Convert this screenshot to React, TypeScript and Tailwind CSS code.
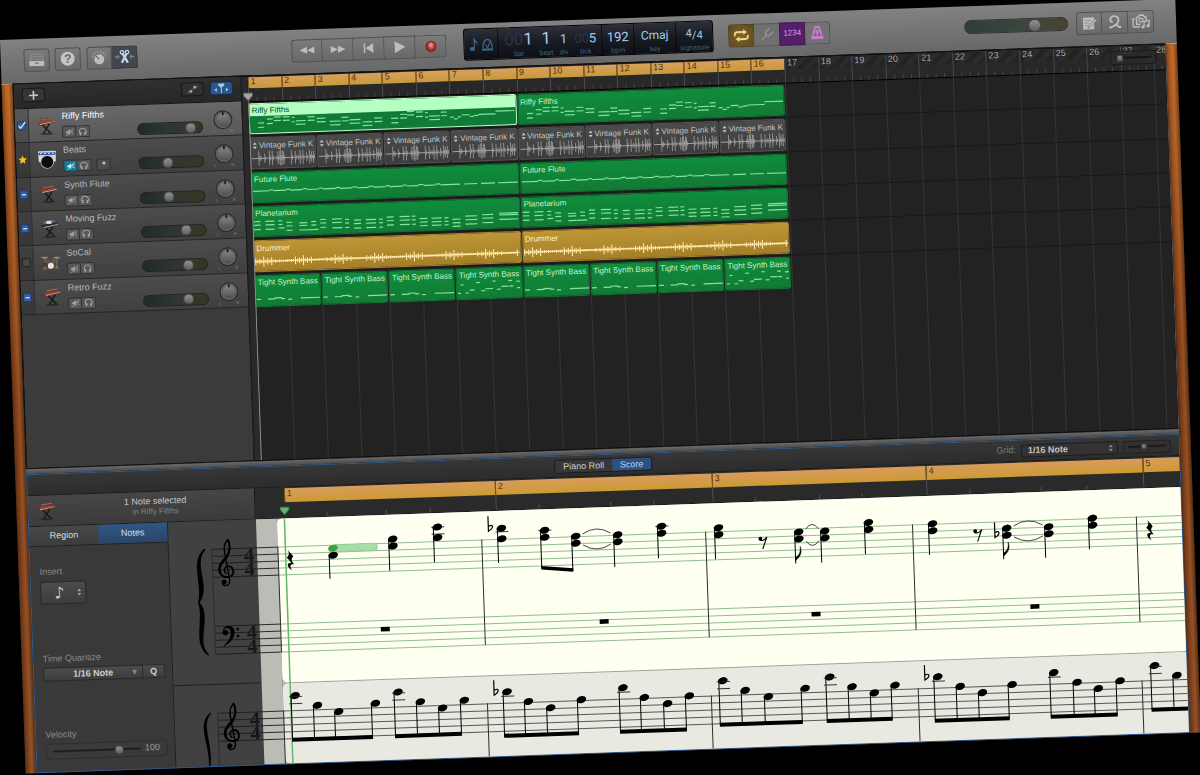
import React from 'react';

type Note = [number, number, number];

const BARS_VISIBLE = 27.34;
const bars = (n: number) => `${(n / BARS_VISIBLE) * 100}%`;

const TRACKS = [
  { name: 'Riffy Fifths', icon: 'keys', lock: 'on', volume: 89 },
  { name: 'Beats', icon: 'machine', lock: 'star', volume: 43 },
  { name: 'Synth Flute', icon: 'keys', lock: 'mixed', volume: 44 },
  { name: 'Moving Fuzz', icon: 'synth', lock: 'mixed', volume: 74 },
  { name: 'SoCal', icon: 'drums', lock: 'off', volume: 76 },
  { name: 'Retro Fuzz', icon: 'keys', lock: 'mixed', volume: 74 },
];

const pair = (x: number, w: number, a: number, b: number): Note[] => [[x, w, a], [x, w, b]];

const RIFFY: Note[] = [
  ...pair(8, 6, 21, 26), ...pair(17, 6, 17, 22), ...pair(24, 7, 15, 19), ...pair(33, 7, 15, 19),
  ...pair(42, 3, 16, 21), ...pair(46, 10, 20, 24), ...pair(58, 7, 16, 20), ...pair(67, 9, 18, 22),
  ...pair(80, 11, 22, 26), ...pair(92, 7, 18, 22), ...pair(100, 11, 21, 25), ...pair(113, 10, 24, 28),
  ...pair(125, 8, 20, 24), ...pair(142, 7, 21, 26), ...pair(151, 7, 17, 21), ...pair(158, 7, 14, 18),
  ...pair(167, 7, 15, 20), ...pair(176, 3, 16, 21), ...pair(180, 11, 20, 24), ...pair(192, 6, 16, 20),
  [201, 4, 22], [205, 4, 24], [209, 3, 22], [213, 8, 20], [221, 4, 22], [225, 5, 21],
  [230, 8, 20], [238, 9, 20], [247, 19, 17],
];

const FLUTE: Note[] = [
  [0, 17, 20], [17, 4, 19], [21, 13, 20], [34, 4, 19], [38, 12, 20], [50, 5, 19], [55, 12, 20], [67, 4, 19],
  [71, 13, 20], [84, 4, 19], [88, 12, 20], [100, 5, 19], [105, 12, 20], [117, 5, 19], [122, 12, 20],
  [134, 4, 19], [138, 13, 20], [151, 4, 19], [155, 12, 20], [167, 5, 19], [172, 12, 20], [184, 5, 19],
  [189, 20, 20], [213, 13, 20], [230, 14, 20], [247, 20, 20],
];

const PLANET_GROUPS: [number, number, number[]][] = [
  [0, 7, [16, 20, 25]], [12, 9, [16, 20, 25]], [25, 4, [16, 20]], [25, 6, [24]], [33, 6, [18, 22, 27]],
  [46, 8, [19, 22, 27]], [58, 5, [18, 22]], [54, 11, [27]], [67, 6, [16, 20, 25]], [79, 10, [16, 20, 26]],
  [92, 4, [17, 21, 26]], [101, 7, [18, 22, 27]], [113, 10, [18, 22, 27]], [126, 4, [18, 22, 27]],
  [134, 7, [16, 20, 25]], [147, 10, [16, 20, 25]], [159, 4, [16, 20, 25]], [167, 8, [19, 23, 27]],
  [179, 10, [19, 23, 27]], [192, 4, [19, 23, 27]], [200, 8, [21, 25, 29]], [213, 12, [18, 22, 27]],
  [230, 11, [17, 21, 26]], [247, 19, [16, 18, 23]],
];
const PLANET: Note[] = PLANET_GROUPS.flatMap(([x, w, ys]) => ys.map((y): Note => [x, w, y]));

const BASS_A: Note[] = [[0, 5, 25], [12, 8, 25], [19, 8, 24], [26, 4, 25], [33, 4, 26], [46, 20, 25]];
const BASS_B: Note[] = [
  [1, 3, 26], [4, 3, 17], [9, 3, 26], [13, 5, 23], [20, 4, 15], [25, 4, 24], [29, 8, 22], [37, 3, 14],
  [41, 4, 23], [46, 7, 20], [53, 4, 14], [54, 4, 20], [61, 4, 15], [62, 3, 22],
];

const FUNK_HITS: [number, number][] = [
  [8, 8], [10, 3], [14, 5], [19, 8], [22, 8], [27, 3], [28, 7], [30, 8], [31, 9], [33, 8], [34, 7],
  [42, 8], [46, 7], [49, 3], [51, 8], [54, 8], [58, 5], [61, 8], [63, 6], [65, 7],
];

function NoteMap({ notes, width }: { notes: Note[]; width: number }) {
  return (
    <svg className="col-start-1 row-start-1 h-full w-full" viewBox={`0 0 ${width} 33`} preserveAspectRatio="none" aria-hidden="true">
      {notes.map(([x, w, y], i) => (
        <rect key={i} x={x} y={y - 0.3} width={w} height={1.3} fill="#84e59d" />
      ))}
    </svg>
  );
}

function FunkWave() {
  return (
    <svg className="col-start-1 row-start-1 h-full w-full" viewBox="0 0 67 33" preserveAspectRatio="none" aria-hidden="true">
      <path d="M0 23h67" stroke="#b5b5b5" strokeWidth="0.9" />
      {FUNK_HITS.map(([x, a], i) => (
        <path key={i} d={`M${x} ${23 - a}V${23 + a}M${x + 1} ${23 - a / 3}v${a / 1.5}`} stroke="#9c9c9c" strokeWidth="0.9" />
      ))}
    </svg>
  );
}

function DrumWave() {
  const hits = Array.from({ length: 133 }, (_, i) => {
    const beat = i % 4 === 0 ? 5.5 : i % 4 === 2 ? 3.4 : 2;
    return Math.max(1.1, beat * (0.6 + 0.4 * Math.sin(i * 12.9)));
  });
  return (
    <svg className="col-start-1 row-start-1 h-full w-full" viewBox="0 0 268 33" preserveAspectRatio="none" aria-hidden="true">
      <path d="M0 23h267" stroke="#ffe6a0" strokeWidth="1.5" />
      {hits.map((a, i) => (
        <path key={i} d={`M${i * 2 + 1} ${23 - a}V${23 + a * 1.1}`} stroke="#ffe9ad" strokeWidth="1.1" />
      ))}
    </svg>
  );
}

interface RegionProps {
  title: string;
  span: number;
  tone?: 'green' | 'gray' | 'gold' | 'selected';
  children: React.ReactNode;
}

function Region({ title, span, tone = 'green', children }: RegionProps) {
  const tones = {
    green: 'border-[#0b7a31] bg-linear-to-b from-[#0f8d3c] to-[#127a36] text-[#c4f2cf]',
    gray: 'border-[#555] bg-linear-to-b from-[#4c4c4c] to-[#3c3c3c] text-[#c4c4c4]',
    gold: 'border-[#a9842a] bg-linear-to-b from-[#bd9636] to-[#a47f28] text-[#fff0c8]',
    selected: 'border-[#b9ffc6] bg-[#107b36] text-[#0a4a1e]',
  };
  return (
    <div className="h-full min-w-0 p-px pl-0" style={{ width: bars(span) }}>
      <div className={`grid h-full grid-cols-1 grid-rows-1 overflow-hidden rounded-[3px] border ${tones[tone]}`}>
        {children}
        <div
          className={`col-start-1 row-start-1 flex h-[12px] items-center gap-[2px] self-start whitespace-nowrap text-[8px] leading-[11px] ${tone === 'selected' ? 'bg-[#b4ffc2] pl-[2px]' : tone === 'gray' ? 'pl-px pt-[2px]' : 'pl-[2px] pt-[2px]'}`}
        >
          {tone === 'gray' && <UpDown className="ml-px h-[7px] w-[4px] shrink-0" />}
          <span>{title}</span>
        </div>
      </div>
    </div>
  );
}

function UpDown({ className = '' }: { className?: string }) {
  return (
    <svg className={className} viewBox="0 0 4 7" fill="currentColor" aria-hidden="true">
      <path d="M2 0l2 2.6H0zM2 7l2-2.6H0z" />
    </svg>
  );
}

function InstrumentIcon({ kind, className = '' }: { kind: string; className?: string }) {
  if (kind === 'machine') {
    return (
      <svg className={className} viewBox="0 0 20 20" aria-hidden="true">
        <path d="M1 2.500q0-1 1-1h16q1 0 1 1l-.5 9q0 1-1 1H2.500q-1 0-1-1z" fill="#d2d9e5" />
        <path d="M1.500 3h17v2.500h-17z" fill="#3156a0" />
        <path d="M3 4h2M7 4h2M11 4h2M15 4h2" stroke="#cfe0ff" />
        <circle cx="10" cy="12.500" r="6.800" fill="#bdbdbd" />
        <circle cx="10" cy="12.500" r="6" fill="#0b0b0b" />
      </svg>
    );
  }
  if (kind === 'drums') {
    return (
      <svg className={className} viewBox="0 0 20 20" fill="none" aria-hidden="true">
        <path d="M4 5v12M16 5v12M2 17l2-3 2 3M14 17l2-3 2 3" stroke="#8b8578" strokeWidth="0.7" />
        <ellipse cx="4" cy="5" rx="3.500" ry="0.900" fill="#a38c54" />
        <ellipse cx="16" cy="5.500" rx="3.500" ry="0.900" fill="#a38c54" />
        <rect x="5" y="7" width="4.500" height="4" rx="0.800" fill="#6b5440" />
        <rect x="10.500" y="7" width="4.500" height="4" rx="0.800" fill="#6b5440" />
        <rect x="1" y="10" width="4.500" height="4" rx="0.800" fill="#4b3b2c" />
        <circle cx="10" cy="13.500" r="3.700" fill="#5c4632" />
        <circle cx="10" cy="13.500" r="3" fill="#e4e4e4" />
      </svg>
    );
  }
  const body = kind === 'synth' ? '#26282f' : '#a03c2a';
  return (
    <svg className={className} viewBox="0 0 20 20" fill="none" aria-hidden="true">
      <ellipse cx="10" cy="18.500" rx="7" ry="1" fill="#1d1d1d" opacity="0.6" />
      <path d="M6 9l8.500 9M13.500 8.500L7 18" stroke="#171717" strokeWidth="1.400" />
      <path d="M1.500 6.500L17 4.500l1.500 2L4 9.500z" fill={body} />
      <path d="M3.500 8.600L18.300 6l.3.800L4 9.600z" fill="#cbb6a6" />
      <path d="M3.500 3.200L14.500 1.500l1.500 2L4.500 5.300z" fill={kind === 'synth' ? '#5b6a8c' : '#5e3d37'} />
      {kind === 'synth' ? <path d="M7 2.500h5v3H7z" fill="#dbe2ee" /> : <path d="M4.800 4.400L15.500 2.700" stroke="#b98372" strokeWidth="0.700" />}
      <path d="M2 7l2 2.800L18.500 7" stroke="#401610" strokeWidth="0.500" />
    </svg>
  );
}

function LockBox({ state, name }: { state: string; name: string }) {
  if (state === 'star') {
    return (
      <svg className="size-[9px]" viewBox="0 0 10 10" role="img" aria-label={`${name} is groove track`}>
        <path d="M5 .3l1.400 3.100 3.400.4-2.500 2.300.7 3.400L5 7.800 2 9.500l.7-3.400L.2 3.800l3.400-.4z" fill="#f4c02e" />
      </svg>
    );
  }
  return (
    <span className="grid place-items-center text-[#e3ecf8]">
      <input
        type="checkbox"
        aria-label={`Match groove: ${name}`}
        defaultChecked={state !== 'off'}
        className="col-start-1 row-start-1 size-[9px] appearance-none rounded-[2px] border border-[#202020] bg-[#484848] checked:border-[#1f3c69] checked:bg-[#315f9f]"
      />
      {state !== 'off' && (
        <svg className="pointer-events-none col-start-1 row-start-1 size-[9px]" viewBox="0 0 9 9" fill="none" stroke="currentColor" aria-hidden="true">
          {state === 'on' ? <path d="M1.500 4.500L3.500 7 8.500 0.800" strokeWidth="1.300" /> : <path d="M2.500 4.500h4" strokeWidth="1.200" />}
        </svg>
      )}
    </span>
  );
}

function PanKnob() {
  return (
    <svg className="h-[26px] w-[26px]" viewBox="0 0 26 26" aria-hidden="true">
      <defs>
        <linearGradient id="pan" x1="0" y1="0" x2="0" y2="1">
          <stop offset="0" stopColor="#868686" />
          <stop offset="1" stopColor="#505050" />
        </linearGradient>
      </defs>
      <circle cx="13" cy="12.500" r="9.500" fill="#2b2b2b" />
      <circle cx="13" cy="12.500" r="8.300" fill="#666" />
      <circle cx="13" cy="12.500" r="6.800" fill="url(#pan)" stroke="#555" strokeWidth="0.600" />
      <path d="M13 4.500v3.500" stroke="#161616" strokeWidth="1.600" />
      <text x="3" y="25" fontSize="4" fill="#8a8a8a">L</text>
      <text x="20" y="25" fontSize="4" fill="#8a8a8a">R</text>
    </svg>
  );
}

function MuteIcon() {
  return (
    <svg className="size-[9px]" viewBox="0 0 9 9" fill="currentColor" aria-hidden="true">
      <path d="M1 3.500h1.500L4.800 1.500v6L2.500 5.700H1z" />
      <path d="M1 8.500L8 1M6 4l2-.6M5.800 5.300l2.200 1" stroke="currentColor" strokeWidth="0.800" />
    </svg>
  );
}

function PhonesIcon() {
  return (
    <svg className="size-[9px]" viewBox="0 0 9 9" fill="none" stroke="currentColor" aria-hidden="true">
      <path d="M1.500 6.500C.3 3 2 1 4.500 1s4.200 2 3 5.500" strokeWidth="1" />
      <path d="M2.300 5v3M6.700 5v3" strokeWidth="1.500" />
    </svg>
  );
}

const thumb =
  '[&::-webkit-slider-thumb]:appearance-none [&::-webkit-slider-thumb]:rounded-full [&::-webkit-slider-thumb]:border [&::-webkit-slider-thumb]:border-[#4a4a4a] [&::-webkit-slider-thumb]:bg-linear-to-b [&::-webkit-slider-thumb]:from-[#929292] [&::-webkit-slider-thumb]:to-[#606060]';

function TrackHeader({ track, selected }: { track: (typeof TRACKS)[number]; selected: boolean }) {
  const small = 'grid h-[12px] w-[14px] place-items-center border border-[#303030] text-[#a4a4a4]';
  return (
    <div
      className={`flex min-h-0 border-b border-[#262626] bg-linear-to-b ${selected ? 'from-[#686868] to-[#585858]' : 'from-[#4c4c4c] to-[#404040]'}`}
    >
      <div className="grid w-[14px] shrink-0 place-items-center border-r border-[#303030] bg-black/15">
        <LockBox state={track.lock} name={track.name} />
      </div>
      <div className="grid w-[33px] shrink-0 place-items-center">
        <InstrumentIcon kind={track.icon} className="size-[20px]" />
      </div>
      <div className="flex w-[75px] shrink-0 flex-col gap-[4px] pt-[2px]">
        <span className={`whitespace-nowrap text-[9px] leading-[12px] ${selected ? 'text-white' : 'text-[#b9b9b9]'}`}>{track.name}</span>
        <div className="flex">
          <button aria-label={`Mute ${track.name}`} className={`${small} rounded-l-[2px] ${track.name === 'Beats' ? 'bg-[#157a9c] text-[#c8efff]' : 'bg-[#585858]'}`}>
            <MuteIcon />
          </button>
          <button aria-label={`Solo ${track.name}`} className={`${small} rounded-r-[2px] border-l-0 bg-[#585858]`}>
            <PhonesIcon />
          </button>
          {track.name === 'Beats' && (
            <button aria-label="Track options" className={`${small} ml-[5px] rounded-[2px] bg-[#4c4c4c]`}>
              <span className="mb-[3px] size-[3px] rounded-full bg-[#c4c4c4]" />
            </button>
          )}
        </div>
      </div>
      <input
        type="range"
        aria-label={`${track.name} volume`}
        defaultValue={track.volume}
        className={`mt-[18px] h-[12px] w-[66px] appearance-none rounded-full border border-[#222] bg-linear-to-r from-[#202c26] via-[#2e3731] to-[#393523] ${thumb} [&::-webkit-slider-thumb]:size-[11px]`}
      />
      <div className="ml-[7px] grid place-items-center pt-[3px]">
        <PanKnob />
      </div>
    </div>
  );
}

function Ruler() {
  return (
    <div className="relative flex h-[26px] overflow-hidden border-b border-black bg-[#282828] pt-px text-[9px] leading-[9px]">
      {Array.from({ length: 28 }, (_, i) => {
        const looped = i < 16;
        return (
          <div key={i} className="h-full shrink-0" style={{ width: bars(1) }}>
            <div
              className={`h-[11px] border-l pl-[2px] ${looped ? 'border-[#8a6420] bg-linear-to-b from-[#d9a05c] to-[#c9993a] text-[#4a3008]' : 'border-[#4a4a4a] bg-[repeating-linear-gradient(135deg,#2b2b2b_0_5px,#232323_5px_10px)] text-[#a8a8a8]'}`}
            >
              {i + 1}
            </div>
            <svg className="h-[14px] w-full" viewBox="0 0 32 14" preserveAspectRatio="none" aria-hidden="true">
              <path d="M.5 0v14" stroke="#4e4e4e" />
              <path d="M8.500 9v4M16.500 9v4M24.500 9v4" stroke="#454545" />
            </svg>
          </div>
        );
      })}
      <div className="absolute right-[9px] top-[5px] flex h-[14px] w-[46px] items-center rounded-[3px] border border-[#1c1c1c] bg-[#2b2b2b]/80 px-1">
        <input
          type="range"
          aria-label="Horizontal zoom"
          defaultValue={4}
          className={`h-[2px] w-full appearance-none rounded-full bg-[#151515] ${thumb} [&::-webkit-slider-thumb]:size-[7px]`}
        />
      </div>
    </div>
  );
}

function Lanes() {
  return (
    <div
      className="relative flex-1 bg-[#222]"
      style={{ backgroundImage: 'linear-gradient(90deg,#343434 1px,transparent 1px)', backgroundSize: `${100 / BARS_VISIBLE}% 100%`, backgroundRepeat: 'repeat-x' }}
    >
      <div className="grid h-[206px] grid-rows-6 divide-y divide-[#1a1a1a]">
        <div className="flex min-h-0">
          <Region title="Riffy Fifths" span={8} tone="selected"><NoteMap notes={RIFFY} width={267} /></Region>
          <Region title="Riffy Fifths" span={8}><NoteMap notes={RIFFY} width={267} /></Region>
        </div>
        <div className="flex min-h-0">
          {Array.from({ length: 8 }, (_, i) => (
            <Region key={i} title="Vintage Funk K" span={2} tone="gray"><FunkWave /></Region>
          ))}
        </div>
        <div className="flex min-h-0">
          <Region title="Future Flute" span={8}><NoteMap notes={FLUTE} width={267} /></Region>
          <Region title="Future Flute" span={8}><NoteMap notes={FLUTE} width={267} /></Region>
        </div>
        <div className="flex min-h-0">
          <Region title="Planetarium" span={8}><NoteMap notes={PLANET} width={267} /></Region>
          <Region title="Planetarium" span={8}><NoteMap notes={PLANET} width={267} /></Region>
        </div>
        <div className="flex min-h-0">
          <Region title="Drummer" span={8} tone="gold"><DrumWave /></Region>
          <Region title="Drummer" span={8} tone="gold"><DrumWave /></Region>
        </div>
        <div className="flex min-h-0">
          {Array.from({ length: 8 }, (_, i) => (
            <Region key={i} title="Tight Synth Bass" span={2}><NoteMap notes={i % 4 === 3 ? BASS_B : BASS_A} width={66} /></Region>
          ))}
        </div>
      </div>
    </div>
  );
}

function Playhead({ color, fill }: { color: string; fill: string }) {
  return (
    <svg className="h-[9px] w-[10px]" viewBox="0 0 10 9" aria-hidden="true">
      <path d="M.5.5h9v3L5 8.500.5 3.500z" fill={fill} stroke={color} />
    </svg>
  );
}

/* ---------- score ---------- */

const STAFF_TOPS = [28, 105, 192];
const BARLINES = [43, 109, 313, 537, 744, 968];

interface Chord {
  x: number;
  heads: number[];
  stem: number;
  ledgers?: number[];
  flag?: boolean;
}

const CHORDS: Chord[] = [
  { x: 164, heads: [38.5], stem: 62 },
  { x: 224, heads: [24.5, 31.5], stem: 56 },
  { x: 269, heads: [14, 24.5], stem: 49, ledgers: [14, 21] },
  { x: 333, heads: [17.5, 28], stem: 52, ledgers: [21] },
  { x: 376, heads: [21, 28], stem: 58, ledgers: [21] },
  { x: 407, heads: [28, 35], stem: 62 },
  { x: 449, heads: [28, 35], stem: 60 },
  { x: 493, heads: [21, 28], stem: 53, ledgers: [21] },
  { x: 550, heads: [24.5, 31.5], stem: 56 },
  { x: 630, heads: [31.5, 38.5], stem: 63, flag: true },
  { x: 656, heads: [31.5, 38.5], stem: 63 },
  { x: 700, heads: [24.5, 31.5], stem: 56 },
  { x: 764, heads: [28, 35], stem: 59 },
  { x: 838, heads: [35, 42], stem: 66, flag: true },
  { x: 880, heads: [35, 42], stem: 66 },
  { x: 924, heads: [28, 35], stem: 59 },
];

const RUNS = [
  { xs: [121, 143, 164, 201], low: false },
  { xs: [224, 246, 268, 290], low: false },
  { xs: [333, 354, 376, 407], low: true },
  { xs: [449, 470, 493, 515], low: true },
  { xs: [549, 571, 594, 631], low: false },
  { xs: [656, 678, 700, 721], low: false },
  { xs: [764, 786, 808, 838], low: true },
  { xs: [880, 903, 924, 946], low: true },
  { xs: [981, 1003, 1025, 1047], low: false },
];

function Head({ x, y, fill = '#000' }: { x: number; y: number; fill?: string }) {
  return <ellipse cx={x} cy={y} rx="4.900" ry="3.400" fill={fill} transform={`rotate(-14 ${x} ${y})`} />;
}

function Flat({ x, y }: { x: number; y: number }) {
  return (
    <path
      d={`M${x - 2} ${y - 10}V${y + 5}C${x + 4} ${y + 1.5} ${x + 3} ${y - 2.5} ${x - 1.5} ${y}`}
      fill="none"
      stroke="#000"
      strokeWidth="1.200"
    />
  );
}

function QuarterRest({ x, y }: { x: number; y: number }) {
  return (
    <path
      transform={`translate(${x} ${y})`}
      d="M-2.500-10.500C-1-8 2.500-5.500 3-3.500 1-1.500.5.500 3.800 4.500 0 3-1.500 6 1.500 10-4 7-4 1.500 1 3-1 0-2-1-3.500-2.500-1-5-.5-7-2.500-10.500z"
    />
  );
}

function EighthRest({ x, y }: { x: number; y: number }) {
  return (
    <g transform={`translate(${x} ${y})`}>
      <circle cx="-2.500" cy="-4" r="1.900" />
      <path d="M-3-2.500C0-1.500 2-2.500 4-5.500L-.5 6.500" fill="none" stroke="#000" strokeWidth="1.100" />
    </g>
  );
}

function TrebleClef({ y }: { y: number }) {
  return (
    <g transform={`translate(47 ${y - 10})`} fill="none" stroke="#000" strokeLinecap="round">
      <path d="M9.500 35C6.500 33 7.500 28 11.500 28" strokeWidth="1.500" />
      <path d="M11.500 27.800C16 28 17.500 32.500 16.200 35.500 14 40 5.500 40 3.300 34" strokeWidth="1.900" />
      <path d="M3.300 34C.8 27 7 23 10.500 18.500" strokeWidth="2.800" />
      <path d="M10.500 18.500C14.500 13.500 14.500 6 12.300 1.500" strokeWidth="2.200" />
      <path d="M12.300 1.500C8.500 4.500 7.800 10 8.700 15L12.700 41C13.300 46.500 8.500 49 5.500 45.500" strokeWidth="1.400" />
      <circle cx="7" cy="43.500" r="2.300" fill="#000" strokeWidth="0.500" />
    </g>
  );
}

function TimeSignature({ y }: { y: number }) {
  return (
    <g fontFamily="'Liberation Serif', serif" fontWeight="700" fontSize="20" textAnchor="middle" fill="#161616">
      <text x="80" y={y + 14}>4</text>
      <text x="80" y={y + 28}>4</text>
    </g>
  );
}

function Ties({ x1, x2, y1, y2 }: { x1: number; x2: number; y1: number; y2: number }) {
  const m = (x1 + x2) / 2;
  return <path d={`M${x1} ${y1}Q${m} ${y1 - 9} ${x2} ${y1}M${x1} ${y2}Q${m} ${y2 + 9} ${x2} ${y2}`} fill="none" stroke="#333" strokeWidth="0.900" />;
}

function Score() {
  return (
    <svg className="absolute inset-0 h-full w-full" viewBox="0 0 1013 245" preserveAspectRatio="xMinYMin slice" role="img" aria-label="Score of Riffy Fifths">
      {STAFF_TOPS.map((top, s) =>
        [0, 7, 14, 21, 28].map((d) => (
          <g key={`${s}-${d}`}>
            <path d={`M43 ${top + d + 0.5}H109`} stroke="#1c1c1c" strokeWidth="0.900" />
            <path d={`M109 ${top + d + 0.5}H1013`} stroke={s < 2 ? '#86b787' : '#4a4a47'} strokeWidth="0.900" />
          </g>
        )),
      )}
      {BARLINES.map((x) => (
        <path key={x} d={`M${x} 28V133.500M${x} 192V245`} stroke="#2c2c2c" strokeWidth="1" />
      ))}

      <path d="M36 28C22 42 41 66 28 81 41 96 22 120 36 134 20 122 34 97 28 81 34 65 20 40 36 28z" stroke="#000" strokeWidth="1.400" />
      <path d="M36 192C24 204 38 224 33 246 36 224 21 205 36 192z" stroke="#000" strokeWidth="1.400" />
      <TrebleClef y={28} />
      <TrebleClef y={192} />
      <circle cx="53.500" cy="112" r="2.800" />
      <path d="M50.800 111C51 104.500 62.500 103.500 62.800 111 63 119 56.500 123.500 50 126.500 56 121.500 59 118 58.800 111.500 58.500 106 52.500 106.500 50.800 111z" />
      <circle cx="66" cy="109" r="1.400" />
      <circle cx="66" cy="116" r="1.400" />
      {STAFF_TOPS.map((top) => <TimeSignature key={top} y={top} />)}

      <path d="M116.500 0V245" stroke="#62b865" strokeWidth="1.500" />

      <QuarterRest x={121} y={42} />
      <QuarterRest x={981} y={42} />
      <EighthRest x={594} y={41} />
      <EighthRest x={809} y={41} />
      <Flat x={322} y={15} />
      <Flat x={828} y={39} />
      <Flat x={322} y={179} />
      <Flat x={753} y={179} />

      <rect x="166" y="28" width="42" height="7" fill="#a9dcab" stroke="#8ccb8f" strokeWidth="0.800" />
      <Head x={164} y={31.5} fill="#3f9f45" />
      {CHORDS.map((c) => (
        <g key={c.x}>
          <path d={`M${c.x - 4} ${c.heads[0]}V${c.stem}`} stroke="#000" strokeWidth="1" />
          {c.ledgers?.map((l) => <path key={l} d={`M${c.x - 6} ${l}h13`} stroke="#222" strokeWidth="0.900" />)}
          {c.heads.map((h) => <Head key={h} x={c.x} y={h} />)}
          {c.flag && <path d={`M${c.x - 4} ${c.stem - 3}C${c.x + 1} ${c.stem - 7} ${c.x + 3} ${c.stem - 11} ${c.x + 1} ${c.stem - 17}C${c.x + 1.5} ${c.stem - 10} ${c.x - 1} ${c.stem - 8} ${c.x - 4} ${c.stem - 6}z`} stroke="#000" strokeWidth="0.500" />}
        </g>
      ))}
      <path d="M371.500 56.500L403.500 60V63.500L371.500 60z" />
      <Ties x1={414} x2={442} y1={26} y2={37} />
      <Ties x1={637} x2={650} y1={29} y2={41} />
      <Ties x1={845} x2={874} y1={33} y2={44} />
      {[213, 432, 644, 863].map((x) => <rect key={x} x={x - 4} y="112" width="9" height="4.500" />)}

      {RUNS.map(({ xs, low }) => {
        const drop = low ? 3.5 : 0;
        const ys = [177.5, 188, 195, 188].map((y) => y + drop);
        const beam = 219.5 + drop;
        return (
          <g key={xs[0]}>
            {xs.map((x, i) => (
              <g key={x}>
                <path d={`M${x - 4} ${ys[i]}V${beam + 2}`} stroke="#000" strokeWidth="1" />
                <Head x={x} y={ys[i]} />
              </g>
            ))}
            <path d={`M${xs[0] - 6} 185.500h13${low ? '' : `M${xs[0] - 6} 178.500h13`}`} stroke="#222" strokeWidth="0.900" />
            <rect x={xs[0] - 4.5} y={beam} width={xs[3] - xs[0] + 1} height="4" />
          </g>
        );
      })}
    </svg>
  );
}

const SCORE_BARS = [
  { width: 211, ticks: [20, 48, 69] },
  { width: 217, ticks: [20, 53, 73] },
  { width: 214, ticks: [20, 50, 70] },
  { width: 217, ticks: [20, 53, 74] },
  { width: 37, ticks: [] },
];

function ScoreRuler() {
  return (
    <div className="flex min-w-0 flex-1 bg-[#2a2a2a] pt-px text-[9px] leading-[10px]">
      <div className="relative" style={{ width: `${(29 / 925) * 100}%` }}>
        <div className="absolute -right-[5px] bottom-[2px] z-10"><Playhead color="#1f6b2c" fill="#6fae78" /></div>
      </div>
      {SCORE_BARS.map((bar, i) => (
        <div key={i} className="flex flex-col" style={{ width: `${(bar.width / 925) * 100}%` }}>
          <div className="h-[14px] border-l border-[#7b5a1e] bg-linear-to-b from-[#d89c5c] to-[#cd9a30] pl-[2px] text-[#4a3008]">{i + 1}</div>
          <svg className="min-h-0 w-full flex-1" aria-hidden="true">
            <line x1="0.5" x2="0.5" y1="0" y2="16" stroke={i === 0 ? '#2a2a2a' : '#555'} />
            {bar.ticks.map((t) => <line key={t} x1={`${t}%`} x2={`${t}%`} y1="11" y2="16" stroke="#555" />)}
          </svg>
        </div>
      ))}
    </div>
  );
}

function Inspector() {
  const label = 'text-[9px] leading-[12px] text-[#8b8b8b]';
  const control = 'border border-[#2a2a2a] bg-linear-to-b from-[#4c4c4c] to-[#3d3d3d] text-[#d0d0d0]';
  return (
    <div className="flex w-[139px] shrink-0 flex-col border-r border-[#222] bg-[#393939]">
      <div role="tablist" className="flex h-[20px] border-b border-[#222] text-[9px]">
        <button role="tab" aria-selected="false" className="w-1/2 bg-linear-to-b from-[#484848] to-[#3c3c3c] text-[#dcdcdc]">Region</button>
        <button role="tab" aria-selected="true" className="w-1/2 bg-linear-to-b from-[#2f5685] to-[#2a4668] text-[#d5e3f2]">Notes</button>
      </div>
      <div className="flex flex-1 flex-col items-start pl-[9px] pt-[19px]">
        <label htmlFor="insert" className={label}>Insert</label>
        <div className={`mt-[4px] grid h-[23px] w-[46px] items-center rounded-[3px] ${control}`}>
          <select id="insert" defaultValue="8" className="col-start-1 row-start-1 h-full w-full appearance-none pl-[13px] font-['DejaVu_Sans',sans-serif] text-[16px] leading-[20px] outline-none">
            <option value="8">♪</option>
          </select>
          <UpDown className="pointer-events-none col-start-1 row-start-1 mr-[4px] h-[7px] w-[4px] justify-self-end text-[#a0a0a0]" />
        </div>
        <label htmlFor="quantize" className={`mt-[48px] ${label}`}>Time Quantize</label>
        <div className="mt-[3px] flex text-[9px] font-bold">
          <div className={`grid h-[14px] w-[100px] items-center rounded-l-[3px] ${control}`}>
            <select id="quantize" className="col-start-1 row-start-1 h-full w-full appearance-none pl-[29px] leading-[11px] outline-none">
              <option>1/16 Note</option>
            </select>
            <svg className="pointer-events-none col-start-1 row-start-1 mr-[5px] size-[5px] justify-self-end" viewBox="0 0 6 6" fill="#888" aria-hidden="true"><path d="M0 0h6L3 6z" /></svg>
          </div>
          <button className={`h-[14px] w-[22px] rounded-r-[3px] border-l-0 leading-[11px] ${control}`}>Q</button>
        </div>
        <label htmlFor="velocity" className={`mt-[47px] ${label}`}>Velocity</label>
        <div className="mt-[3px] flex h-[16px] w-[122px] items-center gap-[4px] rounded-[3px] border border-[#2e2e2e] bg-[#3a3a3a] pl-[6px] text-[9px] text-[#9c9c9c]">
          <input
            id="velocity"
            type="range"
            max={127}
            defaultValue={100}
            className={`h-[2px] w-[88px] appearance-none rounded-full bg-[#1e1e1e] ${thumb} [&::-webkit-slider-thumb]:size-[9px]`}
          />
          <output htmlFor="velocity">100</output>
        </div>
      </div>
    </div>
  );
}

function Editor() {
  return (
    <section className="flex flex-col border border-[#2d5c92] bg-[#393939]">
      <div className="grid h-[21px] grid-cols-[1fr_auto_1fr] items-center border-b border-[#1c1c1c] bg-linear-to-b from-[#363636] to-[#2c2c2c] text-[9px]">
        <div />
        <div className="flex h-[14px] overflow-hidden rounded-[3px] border border-[#1d1d1d] leading-[12px]">
          <button className="w-[57px] bg-[#383838] text-[#cfcfcf]">Piano Roll</button>
          <button className="w-[39px] bg-linear-to-b from-[#2b5080] to-[#2c5384] text-[#b9d4f2]">Score</button>
        </div>
        <div className="flex items-center justify-end gap-[5px] pr-[8px]">
          <label htmlFor="grid" className="text-[#7b7b7b]">Grid:</label>
          <div className="grid h-[13px] w-[97px] items-center rounded-[3px] border border-[#1e1e1e] bg-[#333] text-[#c4c4c4]">
            <select id="grid" className="col-start-1 row-start-1 h-full w-full appearance-none pl-[6px] font-bold leading-[11px] outline-none">
              <option>1/16 Note</option>
            </select>
            <UpDown className="pointer-events-none col-start-1 row-start-1 mr-[4px] h-[7px] w-[4px] justify-self-end text-[#888]" />
          </div>
          <div className="flex h-[13px] w-[48px] items-center rounded-[3px] border border-[#222] bg-[#303030] px-[4px]">
            <input type="range" aria-label="Editor zoom" defaultValue={42} className={`h-[2px] w-full appearance-none bg-[#1c1c1c] ${thumb} [&::-webkit-slider-thumb]:size-[6px]`} />
          </div>
        </div>
      </div>
      <div className="flex h-[31px] border-b border-[#1c1c1c]">
        <div className="flex w-[227px] shrink-0 items-center border-r border-[#1c1c1c] bg-linear-to-b from-[#464646] to-[#3b3b3b] pl-[8px]">
          <InstrumentIcon kind="keys" className="size-[20px]" />
          <div className="flex-1 pb-px text-center">
            <p className="text-[9px] leading-[11px] text-[#c9c9c9]">1 Note selected</p>
            <p className="text-[8px] leading-[10px] text-[#838383]">in Riffy Fifths</p>
          </div>
        </div>
        <ScoreRuler />
      </div>
      <div className="flex h-[245px]">
        <Inspector />
        <div className="relative flex min-w-0 flex-1">
          <div className="flex w-[88px] shrink-0 flex-col bg-[#414141]">
            <div className="h-[164px] border-b border-[#222]" />
          </div>
          <div className="w-[21px] shrink-0 bg-[#bcbcb7]" />
          <div className="flex flex-1 flex-col bg-[#bcbcb7]">
            <div className="h-[164px] rounded-l-[5px] bg-[#fffff2]" />
            <div className="flex-1 rounded-l-[5px] border-t border-[#a2a29c] bg-[#e9e9e1]" />
          </div>
          <Score />
        </div>
      </div>
    </section>
  );
}

function Lcd() {
  const cell = 'flex flex-col items-center justify-end';
  const small = 'text-[7px] leading-[8px] text-[#3f617e]';
  return (
    <div className="ml-[17px] flex h-[32px] w-[250px] rounded-[3px] border border-black bg-linear-to-b from-[#2c2f38] via-[#181b22] to-[#0e1016] font-['Liberation_Sans_Narrow','Roboto',sans-serif] text-[#a5cdf0]">
      <div className="flex w-[34px] items-center justify-center gap-[3px] border-r border-black/60 text-[#3f6486]">
        <svg className="h-[14px] w-[9px]" viewBox="0 0 9 14" fill="currentColor" aria-hidden="true">
          <ellipse cx="2.800" cy="11.500" rx="2.600" ry="2" />
          <path d="M4.200 11.500V.5h1.200c0 3 3.600 3 2.600 7.500-.4-2-1.300-2.600-2.600-3v6.500z" />
        </svg>
        <svg className="h-[13px] w-[12px]" viewBox="0 0 12 13" fill="none" stroke="currentColor" aria-hidden="true">
          <path d="M1.500 10C1.500 4 3.500 1.500 6 1.500s4.500 2.500 4.500 8.500" strokeWidth="1.400" />
          <path d="M.5 11.500h11" strokeWidth="2.200" />
          <path d="M6 10l2.500-6M4 6.500l2 3" strokeWidth="1.100" />
        </svg>
      </div>
      <div className="flex w-[104px] justify-between border-r border-black/60 pl-[6px] pr-[5px]">
        <div className={cell}><span className="text-[17px] leading-[21px]"><span className="text-[#2e3440]">00</span>1</span><span className={small}>bar</span></div>
        <div className={cell}><span className="text-[17px] leading-[21px]">1</span><span className={small}>beat</span></div>
        <div className={cell}><span className="text-[13px] leading-[19px]">1</span><span className={small}>div</span></div>
        <div className={cell}><span className="text-[13px] leading-[19px]"><span className="text-[#2e3440]">00</span>5</span><span className={small}>tick</span></div>
      </div>
      <div className={`${cell} w-[32px] border-r border-black/60`}><span className="text-[13px] leading-[19px]">192</span><span className={small}>bpm</span></div>
      <div className={`${cell} w-[42px] border-r border-black/60`}><span className="text-[12px] leading-[19px]">Cmaj</span><span className={small}>key</span></div>
      <div className={`${cell} flex-1`}>
        <span className="flex text-[11px] leading-[17px]"><sup className="top-0 mt-[-2px] text-[11px] leading-[17px]">4</sup>/<span>4</span></span>
        <span className={small}>signature</span>
      </div>
    </div>
  );
}

const toolButton = 'grid h-[23px] place-items-center border border-[#505050] bg-linear-to-b from-[#7b7b7b] to-[#686868] text-[#bdbdbd]';

function Toolbar() {
  return (
    <header className="flex h-[44px] items-center bg-linear-to-b from-[#828282] to-[#686868] pb-[2px] pl-[23px] pr-[22px]">
      <button aria-label="Library" className={`w-[26px] rounded-[3px] ${toolButton}`}>
        <svg className="h-[14px] w-[16px]" viewBox="0 0 16 14" fill="none" stroke="currentColor" aria-hidden="true">
          <path d="M3.500 1.500h9M2.800 4h10.500M2 6.500h12" stroke="#979797" strokeDasharray="1.500 .7" />
          <path d="M2.500 1L1 9M13.500 1L15 9" stroke="#979797" strokeWidth="0.700" />
          <path d="M1 8.800h14v4H1z" fill="currentColor" />
          <path d="M6 10.500h4" stroke="#777" strokeWidth="1.200" />
        </svg>
      </button>
      <button aria-label="Quick Help" className={`ml-[5px] w-[26px] rounded-[3px] ${toolButton}`}>
        <span className="grid size-[14px] place-items-center rounded-full bg-[#c4c4c4] text-[12px] font-bold leading-none text-[#666]">?</span>
      </button>
      <div className="ml-[6px] flex">
        <button aria-label="Smart Controls" className={`w-[25px] rounded-l-[3px] ${toolButton}`}>
          <svg className="size-[15px]" viewBox="0 0 15 15" fill="currentColor" aria-hidden="true">
            <circle cx="7.500" cy="8.800" r="5" />
            <path d="M7.500 8.800L4.500 5.300" stroke="#6b6b6b" strokeWidth="1.200" />
            <g fill="#a2a2a2">
              <circle cx="1.300" cy="5.500" r=".9" /><circle cx="3" cy="2.600" r=".9" /><circle cx="6" cy="1.300" r=".9" />
              <circle cx="9.300" cy="1.300" r=".9" /><circle cx="12.200" cy="2.600" r=".9" /><circle cx="13.800" cy="5.500" r=".9" />
            </g>
          </svg>
        </button>
        <button aria-label="Editors" className="grid h-[23px] w-[26px] place-items-center rounded-r-[3px] border border-l-0 border-[#33363b] bg-[#43464c] text-[#c2d3e6]">
          <svg className="h-[14px] w-[20px]" viewBox="0 0 20 14" fill="none" stroke="currentColor" aria-hidden="true">
            <path d="M8 3.800L13 13M12 3.800L7 13" strokeWidth="2.300" />
            <circle cx="7.500" cy="2.600" r="1.700" strokeWidth="1.300" /><circle cx="12.500" cy="2.600" r="1.700" strokeWidth="1.300" />
            <path d="M0 7h5M15 7h5M3.500 5v4M16.500 5v4" stroke="#7a8691" strokeWidth="1.300" />
          </svg>
        </button>
      </div>

      <div className="ml-[154px] flex">
        <button aria-label="Rewind" className={`w-[31px] rounded-l-[3px] ${toolButton}`}>
          <svg className="h-[8px] w-[15px]" viewBox="0 0 15 9" fill="currentColor" preserveAspectRatio="none" aria-hidden="true"><path d="M7.500.5v8L0 4.500zM15 .5v8L7.500 4.500z" /></svg>
        </button>
        <button aria-label="Forward" className={`w-[31px] border-l-0 ${toolButton}`}>
          <svg className="h-[8px] w-[15px]" viewBox="0 0 15 9" fill="currentColor" preserveAspectRatio="none" aria-hidden="true"><path d="M0 .5v8l7.500-4zM7.500.5v8l7.500-4z" /></svg>
        </button>
        <button aria-label="Go to beginning" className={`w-[31px] border-l-0 ${toolButton}`}>
          <svg className="h-[10px] w-[10px]" viewBox="0 0 10 10" fill="currentColor" aria-hidden="true"><path d="M0 0h1.700v10H0zM10 0v10L2 5z" /></svg>
        </button>
        <button aria-label="Play" className={`w-[31px] border-l-0 ${toolButton}`}>
          <svg className="h-[12px] w-[11px]" viewBox="0 0 11 12" fill="currentColor" aria-hidden="true"><path d="M0 0l11 6L0 12z" /></svg>
        </button>
        <button aria-label="Record" className={`w-[31px] rounded-r-[3px] border-l-0 ${toolButton}`}>
          <span className="size-[11px] rounded-full border border-[#6d2020] bg-radial-[at_50%_35%] from-[#f0a8a0] to-[#b02424] to-60%" />
        </button>
      </div>

      <Lcd />

      <div className="ml-[15px] flex">
        <button aria-label="Cycle" className="grid h-[23px] w-[26px] place-items-center rounded-l-[3px] border border-[#54431c] bg-radial from-[#80652a] to-[#5c491f] text-[#f2d58c]">
          <svg className="h-[13px] w-[16px]" viewBox="0 0 16 13" fill="none" stroke="currentColor" strokeWidth="1.800" aria-hidden="true">
            <path d="M1.500 7V5.500Q1.500 3 4 3h7M14.500 6v1.500q0 2.500-2.500 2.500H5" />
            <path d="M10 .3v5.400L13.800 3zM6 7.300v5.400L2.200 10z" fill="currentColor" stroke="none" />
          </svg>
        </button>
        <button aria-label="Tuner" className="grid h-[23px] w-[25px] place-items-center border-y border-[#5a5a5a] bg-[#707070] text-[#8f8f8f]">
          <svg className="size-[14px]" viewBox="0 0 14 14" fill="none" stroke="currentColor" strokeWidth="1.600" aria-hidden="true">
            <path d="M1 13l4.500-4.500M9.500 1L6 4.500C4 7 7 10 9.500 8L13 4.500" />
          </svg>
        </button>
        <button aria-label="Count in" className="grid h-[23px] w-[26px] place-items-center border border-[#441a55] bg-[#542169] text-[#e0a0ee]">
          <span className="text-[8px] leading-[10px]">1234</span>
        </button>
        <button aria-label="Metronome" className="grid h-[23px] w-[25px] place-items-center rounded-r-[3px] border border-l-0 border-[#555] bg-[#727272] text-[#d079da]">
          <svg className="size-[14px]" viewBox="0 0 14 14" fill="none" stroke="currentColor" aria-hidden="true">
            <path d="M2.500 10L5.200 1.500h3.600L11.500 10" strokeWidth="1.700" />
            <path d="M1 12h12" strokeWidth="3" />
            <path d="M7 10V4M5 6.500h4" strokeWidth="1.500" />
          </svg>
        </button>
      </div>

      <input
        type="range"
        aria-label="Master volume"
        defaultValue={71}
        className={`ml-auto h-[14px] w-[104px] appearance-none rounded-full border border-[#333] bg-linear-to-r from-[#303d38] via-[#3a453e] to-[#48442f] ${thumb} [&::-webkit-slider-thumb]:size-[13px]`}
      />
      <div className="ml-[8px] flex">
        <button aria-label="Note Pad" className={`w-[26px] rounded-l-[3px] ${toolButton}`}>
          <svg className="size-[15px]" viewBox="0 0 15 15" fill="currentColor" aria-hidden="true">
            <path d="M1 1.500h11v12H1z" />
            <path d="M2.500 4.500h7M2.500 7h5M2.500 9.500h4" stroke="#8a8a8a" strokeWidth=".8" />
            <path d="M15 4.500L8 11.500l-2.500 1 1-2.500L13.500 3z" stroke="#6b6b6b" strokeWidth=".6" />
          </svg>
        </button>
        <button aria-label="Loop Browser" className={`w-[26px] border-l-0 ${toolButton}`}>
          <svg className="h-[14px] w-[15px]" viewBox="0 0 15 14" fill="none" stroke="currentColor" strokeWidth="1.800" aria-hidden="true">
            <path d="M5.500 7.200C1.500 5 3.500 1 7.300 1c4.200 0 5.500 4 3 7C8.500 10.500 6 11.500 2 12.500M9.500 9.500C10.500 11.500 12 12.300 14 12.300" />
          </svg>
        </button>
        <button aria-label="Media Browser" className={`w-[26px] rounded-r-[3px] border-l-0 ${toolButton}`}>
          <svg className="h-[15px] w-[18px]" viewBox="0 0 18 15" fill="none" stroke="currentColor" aria-hidden="true">
            <path d="M3 4.500H1v8h7" strokeWidth="1.400" />
            <path d="M4.500 3h2l1-2h4l1 2h1.500v3M4.500 3v7h4" strokeWidth="1.500" />
            <circle cx="9" cy="6" r="2" strokeWidth="1.200" />
            <path d="M12 12.500V7.500l5-1v5" strokeWidth="1.300" />
            <circle cx="10.800" cy="12.800" r="1.600" fill="currentColor" stroke="none" /><circle cx="15.800" cy="11.800" r="1.600" fill="currentColor" stroke="none" />
          </svg>
        </button>
      </div>
    </header>
  );
}

function TracksArea() {
  return (
    <section className="flex h-[386px] overflow-hidden border border-[#161616] border-r-[#555]">
      <div className="flex w-[227px] shrink-0 flex-col bg-[#3b3b3b]">
        <div className="flex h-[25px] items-center border-b border-[#161616] bg-linear-to-b from-[#303030] to-[#272727] px-[8px] pb-[2px]">
          <button aria-label="Add track" className="grid h-[14px] w-[23px] place-items-center rounded-[3px] border border-[#191919] bg-[#363636]">
            <svg className="size-[9px]" viewBox="0 0 9 9" stroke="#c4c4c4" strokeWidth="1.700" aria-hidden="true"><path d="M4.500 0v9M0 4.500h9" /></svg>
          </button>
          <button aria-label="Show automation" className="ml-auto grid h-[14px] w-[23px] place-items-center rounded-[3px] border border-[#191919] bg-[#303030]">
            <svg className="h-[8px] w-[12px]" viewBox="0 0 12 8" fill="#b5b5b5" stroke="#777" strokeWidth=".7" aria-hidden="true">
              <path d="M0 7.500l4-1.500L8 2l4-.5" fill="none" /><circle cx="4" cy="6" r="1.400" /><circle cx="8" cy="2" r="1.400" />
            </svg>
          </button>
          <button aria-label="Catch playhead" className="ml-[6px] grid h-[14px] w-[23px] place-items-center rounded-[3px] border border-[#16283f] bg-[#2b5687]">
            <svg className="h-[10px] w-[15px]" viewBox="0 0 15 10" fill="#a5cdf2" aria-hidden="true">
              <path d="M4.500 0h6v2l-3 2.500-3-2.500z" /><path d="M7 3h1v7H7zM3 4.500v4L.5 6.500zM12 4.500v4l2.500-2z" />
            </svg>
          </button>
        </div>
        <div className="grid h-[206px] grid-rows-6">
          {TRACKS.map((t, i) => <TrackHeader key={t.name} track={t} selected={i === 0} />)}
        </div>
      </div>
      <div className="w-[7px] shrink-0 border-l border-[#1a1a1a] bg-[#2a2a2a]" />
      <div className="relative flex min-w-0 flex-1 flex-col">
        <Ruler />
        <Lanes />
        <div className="pointer-events-none absolute -left-[5px] bottom-0 top-[16px] flex w-[10px] flex-col items-center">
          <Playhead color="#555" fill="#a5a5a5" />
          <div className="w-px flex-1 bg-[#8d8d8d]" />
        </div>
      </div>
    </section>
  );
}

export default function App() {
  const wood =
    'w-[11px] shrink-0 border-t border-[#e0a070] bg-[linear-gradient(90deg,rgba(0,0,0,.3),transparent_35%,rgba(255,190,120,.12)_60%,rgba(0,0,0,.35)),linear-gradient(180deg,#b86224,#85421b_45%,#83441e)]';
  return (
    <div className="h-screen w-full overflow-hidden bg-black pt-[40px] font-['Liberation_Sans',Arial,sans-serif]">
      <main className="w-[98%] origin-top-left -rotate-2">
        <Toolbar />
        <div className="flex">
          <div className={wood} />
          <div className="flex min-w-0 flex-1 flex-col">
            <TracksArea />
            <div className="h-[5px] bg-linear-to-b from-[#6b6b6b] to-[#4a4a4a]" />
            <Editor />
          </div>
          <div className={wood} />
        </div>
      </main>
    </div>
  );
}
